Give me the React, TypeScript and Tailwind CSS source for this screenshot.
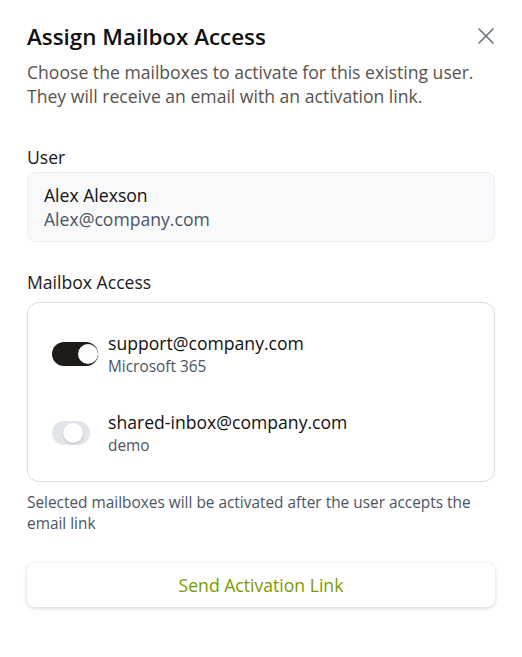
import { useState } from "react"
import { X } from "lucide-react"

type mailboxType = {
    address: string
    provider: string
    enabled: boolean
}

const initialMailboxes: mailboxType[] = [
    { address: "support@company.com", provider: "Microsoft 365", enabled: true },
    { address: "shared-inbox@company.com", provider: "demo", enabled: false },
]

export default function App(){
    const [mailboxes, setMailboxes] = useState<mailboxType[]>(initialMailboxes)

    function toggle(address: string){
        setMailboxes(prev => prev.map(m => m.address === address ? { ...m, enabled: !m.enabled } : m))
    }

    return <div className="w-[522px] h-[657px] bg-white px-[27px] pt-[23px] text-[#1a1a1a]" style={{ fontFamily: '"Open Sans", "Noto Sans", sans-serif' }}>
        <div className="flex items-start justify-between">
            <div className="text-[22.4px] leading-7 font-semibold text-[#111]">Assign Mailbox Access</div>
            <button className="-mt-[1px] mr-[-5px] text-[#6b7280]">
                <X size={28} strokeWidth={1.4}/>
            </button>
        </div>
        <div className="mt-[9px] text-[17.6px] leading-6 text-[#57524e]">
            Choose the mailboxes to activate for this existing user.<br/>
            They will receive an email with an activation link.
        </div>

        <div className="mt-[37px] text-[17.6px] leading-6">User</div>
        <div className="mt-[3px] rounded-lg border border-[#eceef1] bg-[#f8f9fb] px-4 py-[10px]">
            <div className="text-[17.6px] leading-6 text-[#111]">Alex Alexson</div>
            <div className="text-[17.6px] leading-6 text-[#4b5563]">Alex@company.com</div>
        </div>

        <div className="mt-[28px] text-[17.6px] leading-6">Mailbox Access</div>
        <div className="mt-[8px] rounded-xl border border-[#d9dce1] bg-white pl-6 pr-6 pt-[28px] pb-[25px] flex flex-col gap-[33px]">
            {mailboxes.map(m => (
                <div key={m.address} className="flex items-center gap-[10px]">
                    <div className="w-[46px] flex items-center">
                        <Switch on={m.enabled} onClick={() => toggle(m.address)}/>
                    </div>
                    <div>
                        <div className="text-[17.6px] leading-6 text-[#111]">{m.address}</div>
                        <div className="text-[15.4px] leading-5 text-[#4b5563] mt-[2px]">{m.provider}</div>
                    </div>
                </div>
            ))}
        </div>

        <div className="mt-[10px] text-[15.4px] leading-[21px] text-[#4b5563]">
            Selected mailboxes will be activated after the user accepts the email link
        </div>

        <button className="mt-[29px] w-full h-11 rounded-lg bg-white text-[17.6px] font-medium text-[#7d9900] shadow-[0_1px_4px_rgba(0,0,0,0.18)]">
            Send Activation Link
        </button>
    </div>
}

function Switch({on, onClick}: {
    on: boolean,
    onClick: () => void
})
{
    if(on)
    {
        return <button onClick={onClick} className="relative h-6 w-[46px] rounded-full bg-[#1f1b19]">
            <span className="absolute right-0 top-[2px] h-5 w-5 rounded-full bg-white shadow-[0_1px_2px_rgba(0,0,0,0.35)]"/>
        </button>
    }
    return <button onClick={onClick} className="relative h-6 w-[38px] rounded-full bg-[#e1e5ea]">
        <span className="absolute left-[11px] top-[2px] h-5 w-5 rounded-full bg-white shadow-[0_1px_2px_rgba(0,0,0,0.2)]"/>
    </button>
}
